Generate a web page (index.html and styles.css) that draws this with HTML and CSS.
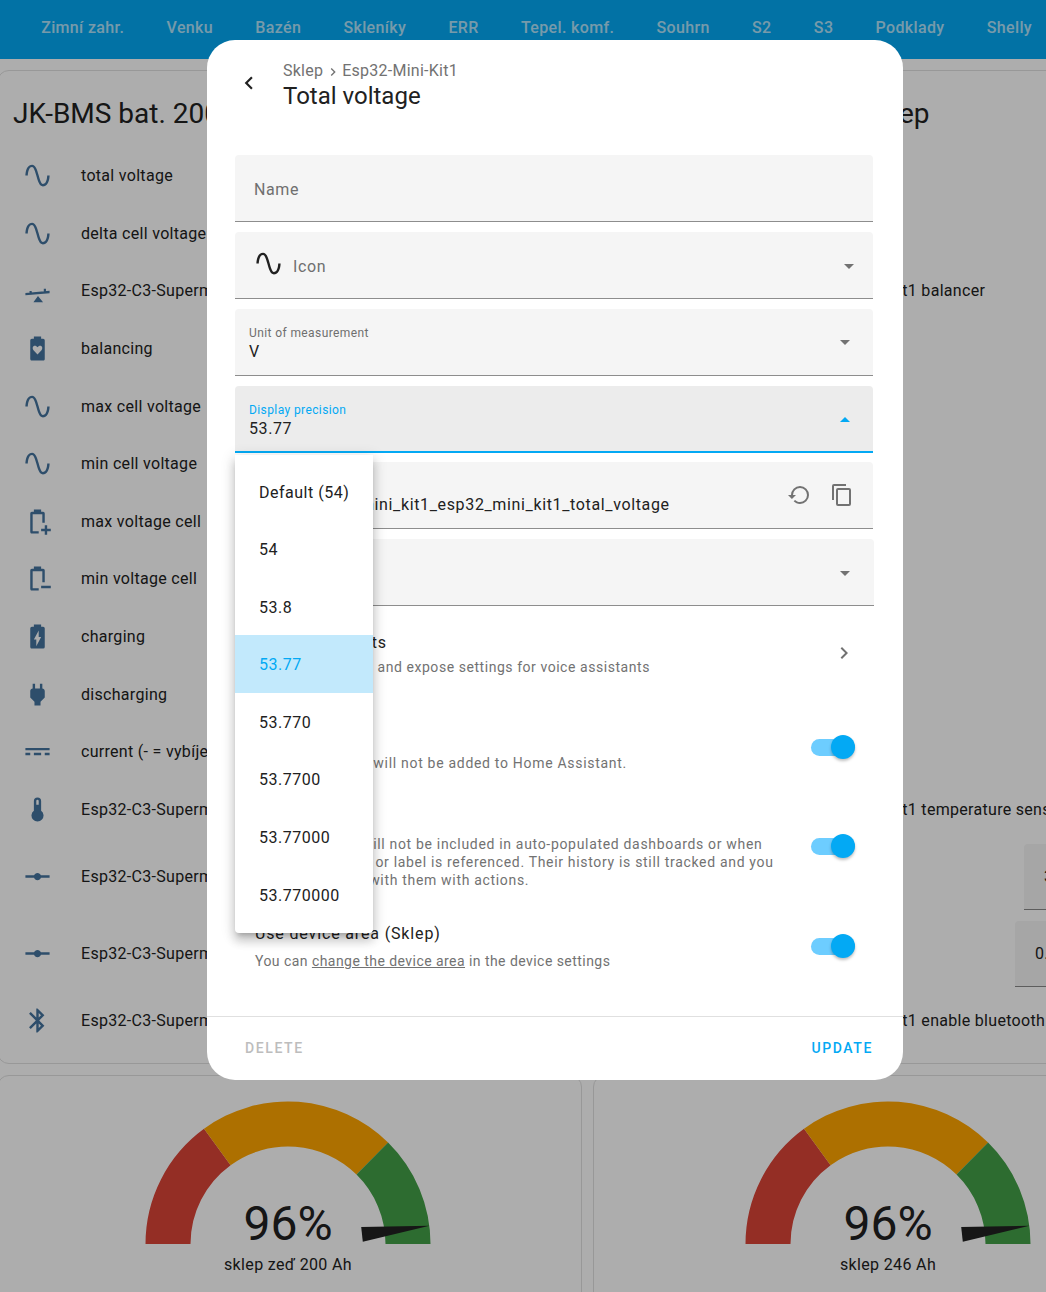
FILE: index.html
```html
<!DOCTYPE html>
<html lang="en">
<head>
    <meta charset="UTF-8">
    <meta name="viewport" content="width=device-width, initial-scale=1.0">
    <title>Total voltage</title>
    <link rel="stylesheet" href="styles.css">
</head>
<body>
    <svg class="icon-defs" aria-hidden="true">
        <symbol id="i-sine" viewBox="0 0 24 24"><path d="M16.5,21C13.5,21 12.31,16.76 11.05,12.28C10.14,9.04 9,5 7.5,5C4.11,5 4,11.93 4,12H2C2,11.63 2.06,3 7.5,3C10.5,3 11.71,7.25 12.97,11.74C13.86,14.97 15,19 16.5,19C19.94,19 20.03,12.07 20.03,12H22.03C22.03,12.37 21.97,21 16.5,21Z"/></symbol>
        <symbol id="i-seesaw" viewBox="0 0 24 24"><path d="M2,14L22,12.2V14.2L2,16ZM5.4,12.4H7.2V14.6H5.4ZM17.2,10.6H19V13H17.2ZM12.4,16.6L16.6,21.8H8.6Z"/></symbol>
        <symbol id="i-bat-heart" viewBox="0 0 24 24"><path fill-rule="evenodd" d="M16.67 4H15V2H9V4H7.33C6.6 4 6 4.6 6 5.33V20.67C6 21.4 6.6 22 7.33 22H16.67C17.41 22 18 21.41 18 20.67V5.33C18 4.6 17.4 4 16.67 4ZM12,17L8.7,13.4C7.5,12 8,9.7 9.8,9.7C10.7,9.7 11.5,10.2 12,11C12.5,10.2 13.3,9.7 14.2,9.7C16,9.7 16.5,12 15.3,13.4Z"/></symbol>
        <symbol id="i-bat-plus" viewBox="0 0 24 24"><path d="M16.67 4H15V2H9V4H7.33C6.6 4 6 4.6 6 5.33V20.67C6 21.4 6.6 22 7.33 22H13V20H8V6H16V13H18V5.33C18 4.6 17.4 4 16.67 4ZM20 18V15H18V18H15V20H18V23H20V20H23V18Z"/></symbol>
        <symbol id="i-bat-minus" viewBox="0 0 24 24"><path d="M16.67 4H15V2H9V4H7.33C6.6 4 6 4.6 6 5.33V20.67C6 21.4 6.6 22 7.33 22H13V20H8V6H16V15H18V5.33C18 4.6 17.4 4 16.67 4ZM15 18H23V20H15Z"/></symbol>
        <symbol id="i-bat-charge" viewBox="0 0 24 24"><path d="M16.67,4H15V2H9V4H7.33A1.33,1.33 0 0,0 6,5.33V20.67C6,21.4 6.6,22 7.33,22H16.67A1.33,1.33 0 0,0 18,20.67V5.33C18,4.6 17.4,4 16.67,4M11,20V14.5H9L13,7V12.5H15L11,20Z"/></symbol>
        <symbol id="i-plug" viewBox="0 0 24 24"><path d="M16,7V3H14V7H10V3H8V7C7,7 6,8 6,9V14.5L9.5,18V21H14.5V18L18,14.5V9C18,8 17,7 16,7Z"/></symbol>
        <symbol id="i-dc" viewBox="0 0 24 24"><path d="M2,9H22V11H2V9M2,13H6V15H2V13M9,13H15V15H9V13M18,13H22V15H18V13Z"/></symbol>
        <symbol id="i-thermo" viewBox="0 0 24 24"><path d="M15 13V5A3 3 0 0 0 9 5V13A5 5 0 1 0 15 13M12 4A1 1 0 0 1 13 5V8H11V5A1 1 0 0 1 12 4Z"/></symbol>
        <symbol id="i-vertex" viewBox="0 0 24 24"><path d="M2 11H9.17C9.58 9.83 10.69 9 12 9S14.42 9.83 14.83 11H22V13H14.83C14.42 14.17 13.31 15 12 15S9.58 14.17 9.17 13H2V11Z"/></symbol>
        <symbol id="i-bt" viewBox="0 0 24 24"><path d="M14.88,16.29L13,18.17V14.41M13,5.83L14.88,7.71L13,9.58M17.71,7.71L12,2H11V9.58L6.41,5L5,6.41L10.59,12L5,17.58L6.41,19L11,14.41V22H12L17.71,16.29L13.41,12L17.71,7.71Z"/></symbol>
        <symbol id="i-down" viewBox="0 0 24 24"><path d="M7,10L12,15L17,10H7Z"/></symbol>
        <symbol id="i-up" viewBox="0 0 24 24"><path d="M7,15L12,10L17,15H7Z"/></symbol>
        <symbol id="i-gauge" viewBox="0 0 286 143">
            <path fill="#db4437" d="M0.5 143A142.5 142.5 0 0 1 59 27.8L85.6 64.2A97.5 97.5 0 0 0 45.5 143Z"/>
            <path fill="#ffa600" d="M59 27.8A142.5 142.5 0 0 1 243.1 41.6L211.5 73.6A97.5 97.5 0 0 0 85.6 64.2Z"/>
            <path fill="#43a047" d="M243.1 41.6A142.5 142.5 0 0 1 285.5 143H240.5A97.5 97.5 0 0 0 211.5 73.6Z"/>
            <path fill="#212121" d="M284.5 124.7L216.2 126L217.8 140.7Z"/>
        </symbol>
    </svg>

    <header class="topbar">
        <span class="tab">Zimní zahr.</span>
        <span class="tab">Venku</span>
        <span class="tab">Bazén</span>
        <span class="tab">Skleníky</span>
        <span class="tab">ERR</span>
        <span class="tab">Tepel. komf.</span>
        <span class="tab">Souhrn</span>
        <span class="tab">S2</span>
        <span class="tab">S3</span>
        <span class="tab">Podklady</span>
        <span class="tab">Shelly</span>
    </header>

    <main class="board">
        <section class="card card-left">
            <h2 class="card-title">JK-BMS bat. 200 Ah zeď</h2>
            <div class="row"><svg class="row-icon"><use href="#i-sine"/></svg><span class="row-name">total voltage</span></div>
            <div class="row"><svg class="row-icon"><use href="#i-sine"/></svg><span class="row-name">delta cell voltage</span></div>
            <div class="row"><svg class="row-icon"><use href="#i-seesaw"/></svg><span class="row-name">Esp32-C3-Supermini-Kit1 balancer</span></div>
            <div class="row"><svg class="row-icon"><use href="#i-bat-heart"/></svg><span class="row-name">balancing</span></div>
            <div class="row"><svg class="row-icon"><use href="#i-sine"/></svg><span class="row-name">max cell voltage</span></div>
            <div class="row"><svg class="row-icon"><use href="#i-sine"/></svg><span class="row-name">min cell voltage</span></div>
            <div class="row"><svg class="row-icon"><use href="#i-bat-plus"/></svg><span class="row-name">max voltage cell</span></div>
            <div class="row"><svg class="row-icon"><use href="#i-bat-minus"/></svg><span class="row-name">min voltage cell</span></div>
            <div class="row"><svg class="row-icon"><use href="#i-bat-charge"/></svg><span class="row-name">charging</span></div>
            <div class="row"><svg class="row-icon"><use href="#i-plug"/></svg><span class="row-name">discharging</span></div>
            <div class="row"><svg class="row-icon"><use href="#i-dc"/></svg><span class="row-name">current (- = vybíjení)</span></div>
            <div class="row"><svg class="row-icon"><use href="#i-thermo"/></svg><span class="row-name">Esp32-C3-Supermini-Kit1 temperature sensor</span></div>
            <div class="row row-input"><svg class="row-icon"><use href="#i-vertex"/></svg><span class="row-name">Esp32-C3-Supermini-Kit1 balance start</span></div>
            <div class="row row-input"><svg class="row-icon"><use href="#i-vertex"/></svg><span class="row-name">Esp32-C3-Supermini-Kit1 balance trigger</span></div>
            <div class="row row-last"><svg class="row-icon"><use href="#i-bt"/></svg><span class="row-name">Esp32-C3-Supermini-Kit1 enable bluetooth</span></div>
        </section>

        <section class="card card-right">
            <h2 class="card-title">JK-BMS bat. 246 Ah sklep</h2>
            <div class="row"><svg class="row-icon"><use href="#i-sine"/></svg><span class="row-name">total voltage</span></div>
            <div class="row"><svg class="row-icon"><use href="#i-sine"/></svg><span class="row-name">delta cell voltage</span></div>
            <div class="row"><svg class="row-icon"><use href="#i-seesaw"/></svg><span class="row-name">Esp32-Mini-Kit1 Esp32-Mini-Kit1 balancer</span></div>
            <div class="row"><svg class="row-icon"><use href="#i-bat-heart"/></svg><span class="row-name">balancing</span></div>
            <div class="row"><svg class="row-icon"><use href="#i-sine"/></svg><span class="row-name">max cell voltage</span></div>
            <div class="row"><svg class="row-icon"><use href="#i-sine"/></svg><span class="row-name">min cell voltage</span></div>
            <div class="row"><svg class="row-icon"><use href="#i-bat-plus"/></svg><span class="row-name">max voltage cell</span></div>
            <div class="row"><svg class="row-icon"><use href="#i-bat-minus"/></svg><span class="row-name">min voltage cell</span></div>
            <div class="row"><svg class="row-icon"><use href="#i-bat-charge"/></svg><span class="row-name">charging</span></div>
            <div class="row"><svg class="row-icon"><use href="#i-plug"/></svg><span class="row-name">discharging</span></div>
            <div class="row"><svg class="row-icon"><use href="#i-dc"/></svg><span class="row-name">current</span></div>
            <div class="row"><svg class="row-icon"><use href="#i-thermo"/></svg><span class="row-name">Esp32-Mini-Kit1 Esp32-Mini-Kit1 temperature sensor</span></div>
            <div class="row row-input"><svg class="row-icon"><use href="#i-vertex"/></svg><span class="row-name">balance start</span><span class="num-box num-a">3.000</span></div>
            <div class="row row-input"><svg class="row-icon"><use href="#i-vertex"/></svg><span class="row-name">balance trigger</span><span class="num-box num-b">0.010</span></div>
            <div class="row row-last"><svg class="row-icon"><use href="#i-bt"/></svg><span class="row-name">Esp32-Mini-Kit1 Esp32-Mini-Kit1 enable bluetooth</span></div>
        </section>

        <section class="card gauge-card gauge-left">
            <div class="gauge">
                <svg class="gauge-arc"><use href="#i-gauge"/></svg>
                <span class="gauge-value">96%</span>
            </div>
            <div class="gauge-name">sklep zeď 200 Ah</div>
        </section>

        <section class="card gauge-card">
            <div class="gauge">
                <svg class="gauge-arc"><use href="#i-gauge"/></svg>
                <span class="gauge-value">96%</span>
            </div>
            <div class="gauge-name">sklep 246 Ah</div>
        </section>
    </main>

    <div class="scrim"></div>

    <div class="dialog">
        <div class="dialog-head">
            <svg class="back" viewBox="0 0 24 24"><path d="M15.41,16.58L10.83,12L15.41,7.41L14,6L8,12L14,18L15.41,16.58Z"/></svg>
            <div>
                <div class="crumb">Sklep <svg class="crumb-sep" viewBox="0 0 24 24"><path d="M8.59,16.58L13.17,12L8.59,7.41L10,6L16,12L10,18L8.59,16.58Z"/></svg> Esp32-Mini-Kit1</div>
                <div class="dialog-title">Total voltage</div>
            </div>
        </div>

        <div class="dialog-body">
            <div class="field field-plain"><span class="placeholder">Name</span></div>
            <div class="field field-icon">
                <svg class="field-glyph"><use href="#i-sine"/></svg>
                <span class="placeholder">Icon</span>
                <svg class="arrow arrow-icon"><use href="#i-down"/></svg>
            </div>
            <div class="field">
                <div class="field-text">
                    <div class="label">Unit of measurement</div>
                    <div class="value">V</div>
                </div>
                <svg class="arrow"><use href="#i-down"/></svg>
            </div>
            <div class="field field-active">
                <div class="field-text">
                    <div class="label">Display precision</div>
                    <div class="value">53.77</div>
                </div>
                <svg class="arrow"><use href="#i-up"/></svg>
            </div>
            <div class="field field-entity">
                <div class="field-text">
                    <div class="label">Entity ID</div>
                    <div class="value">sensor.esp32_mini_kit1_esp32_mini_kit1_total_voltage</div>
                </div>
                <svg class="tool tool-restore" viewBox="0 0 24 24"><path d="M13,3A9,9 0 0,0 4,12H1L4.89,15.89L4.96,16.03L9,12H6A7,7 0 0,1 13,5A7,7 0 0,1 20,12A7,7 0 0,1 13,19C11.07,19 9.32,18.21 8.06,16.94L6.64,18.36C8.27,20 10.5,21 13,21A9,9 0 0,0 22,12A9,9 0 0,0 13,3Z"/></svg>
                <svg class="tool" viewBox="0 0 24 24"><path d="M19,21H8V7H19M19,5H8A2,2 0 0,0 6,7V21A2,2 0 0,0 8,23H19A2,2 0 0,0 21,21V7A2,2 0 0,0 19,5M16,1H4A2,2 0 0,0 2,3V17H4V3H16V1Z"/></svg>
            </div>
            <div class="field field-area">
                <div class="field-text"><span class="placeholder">Area</span></div>
                <svg class="arrow"><use href="#i-down"/></svg>
            </div>

            <div class="setting setting-voice">
                <div class="setting-text">
                    <div class="setting-title">Voice assistants</div>
                    <div class="setting-sub">Manage aliases and expose settings for voice assistants</div>
                </div>
                <svg class="chevron" viewBox="0 0 24 24"><path d="M8.59,16.58L13.17,12L8.59,7.41L10,6L16,12L10,18L8.59,16.58Z"/></svg>
            </div>
            <div class="setting setting-enabled">
                <div class="setting-text">
                    <div class="setting-title">Enabled</div>
                    <div class="setting-sub">Disabled entities will not be added to Home Assistant.</div>
                </div>
                <span class="switch"></span>
            </div>
            <div class="setting setting-visible">
                <div class="setting-text">
                    <div class="setting-title">Visible</div>
                    <div class="setting-sub">Hidden entities will not be included in auto-populated dashboards or when their area, device or label is referenced. Their history is still tracked and you can still interact with them with actions.</div>
                </div>
                <span class="switch"></span>
            </div>
            <div class="setting setting-area">
                <div class="setting-text">
                    <div class="setting-title">Use device area (Sklep)</div>
                    <div class="setting-sub">You can <span class="link">change the device area</span> in the device settings</div>
                </div>
                <span class="switch"></span>
            </div>
        </div>

        <div class="dialog-foot">
            <span class="btn btn-off">DELETE</span>
            <span class="btn btn-on">UPDATE</span>
        </div>

        <ul class="menu">
            <li>Default (54)</li>
            <li>54</li>
            <li>53.8</li>
            <li class="selected">53.77</li>
            <li>53.770</li>
            <li>53.7700</li>
            <li>53.77000</li>
            <li>53.770000</li>
        </ul>
    </div>
</body>
</html>
```

FILE: styles.css
```css
* {
    box-sizing: border-box;
}
html, body {
    width: 1046px;
    height: 1292px;
    margin: 0;
    overflow: hidden;
}
body {
    position: relative;
    background-color: #fff;
    color: #212121;
    font-family: Roboto, "Liberation Sans", sans-serif;
    font-size: 16px;
}
.icon-defs {
    position: absolute;
    width: 0;
    height: 0;
}

/* top bar */
.topbar {
    display: flex;
    align-items: center;
    height: 59px;
    padding: 0 0 5px 20px;
    background-color: #03a9f4;
    white-space: nowrap;
}
.tab {
    padding: 0 21.15px;
    color: rgba(255, 255, 255, 0.7);
    font-weight: 500;
    letter-spacing: 0.35px;
}

/* cards behind the dialog */
.board {
    display: grid;
    grid-template-columns: 585px 590px;
    gap: 11px;
    margin: 11px 0 0 -3px;
}
.card {
    border: 1px solid #e0e0e0;
    border-radius: 12px;
    overflow: hidden;
}
.card-left, .card-right {
    height: 994px;
    padding: 0 15px;
}
.card-title {
    margin: 0;
    padding-top: 26px;
    height: 76px;
    font-size: 28px;
    font-weight: 400;
    white-space: nowrap;
}
.row {
    display: flex;
    align-items: center;
    height: 57.6px;
    white-space: nowrap;
    letter-spacing: 0.3px;
}
.row-input {
    height: 77px;
}
.row-last {
    height: 56.4px;
}
.row-icon {
    flex: none;
    width: 29px;
    height: 29px;
    margin: 0 29.5px 0 9.5px;
    fill: #44739e;
}
.card-right .row-icon {
    margin-right: 32.5px;
}
.row-name {
    flex: 1;
    min-width: 0;
}
.num-box {
    flex: none;
    height: 66px;
    padding-left: 20px;
    line-height: 66px;
    background-color: #f5f5f5;
    border-bottom: 1px solid #8a8a8a;
    border-radius: 4px 4px 0 0;
}
.num-a {
    width: 143px;
}
.num-b {
    width: 152px;
}
.gauge-card {
    height: 240px;
    padding-top: 25px;
    text-align: center;
}
.gauge-left {
    padding-right: 3px;
}
.gauge {
    position: relative;
    width: 286px;
    height: 143px;
    margin: 0 auto;
}
.gauge-arc {
    display: block;
    width: 286px;
    height: 143px;
}
.gauge-value {
    position: absolute;
    left: 0;
    right: 0;
    top: 93px;
    font-size: 48px;
    line-height: 60px;
}
.gauge-name {
    margin-top: 11px;
    line-height: 20px;
    letter-spacing: 0.35px;
}

.scrim {
    position: absolute;
    inset: 0;
    background-color: rgba(0, 0, 0, 0.32);
}

/* dialog */
.dialog {
    position: absolute;
    left: 207px;
    top: 40px;
    display: flex;
    flex-direction: column;
    width: 696px;
    height: 1040px;
    background-color: #fff;
    border-radius: 28px;
}
.dialog-head {
    display: flex;
    height: 115px;
    padding: 21px 0 0 29px;
}
.back {
    flex: none;
    width: 26px;
    height: 26px;
    margin-top: 9px;
    margin-right: 21px;
    fill: #212121;
}
.crumb {
    display: flex;
    align-items: center;
    color: #727272;
    line-height: 20px;
    letter-spacing: 0.25px;
}
.crumb-sep {
    flex: none;
    width: 16px;
    height: 16px;
    margin: 1px 1px 0 2px;
    fill: #727272;
}
.dialog-title {
    font-size: 24px;
    line-height: 31px;
}
.dialog-body {
    flex: 1;
    padding: 0 30px 0 28px;
}

.field {
    display: flex;
    align-items: center;
    height: 67px;
    margin-bottom: 10px;
    padding: 0 16px 0 14px;
    background-color: #f5f5f5;
    border-bottom: 1px solid #8d8d8d;
    border-radius: 4px 4px 0 0;
    letter-spacing: 0.6px;
}
.field-plain {
    padding-left: 19px;
    padding-top: 2px;
}
.field-icon {
    padding-left: 19px;
    padding-top: 2px;
}
.field-glyph {
    flex: none;
    width: 29px;
    height: 29px;
    margin: 0 10px 5px 0;
    fill: #212121;
}
.field-text {
    flex: 1;
    min-width: 0;
    padding-top: 6px;
    white-space: nowrap;
}
.placeholder {
    color: #6f6f6f;
}
.label {
    color: #6f6f6f;
    font-size: 12px;
    line-height: 14px;
    letter-spacing: 0.4px;
}
.value {
    line-height: 24px;
}
.arrow {
    flex: none;
    width: 24px;
    height: 24px;
    fill: #727272;
}
.arrow-icon {
    margin-left: auto;
    margin-right: -4px;
}
.field-active {
    margin-bottom: 9px;
    background-color: #ececec;
    border-bottom: 2px solid #03a9f4;
}
.field-active .label {
    color: #03a9f4;
}
.field-active .arrow {
    fill: #03a9f4;
}
.field-entity .field-text {
    padding-top: 0;
}
.field-entity .value {
    margin-top: 5px;
    letter-spacing: 0.64px;
}
.tool {
    flex: none;
    width: 24px;
    height: 24px;
    margin-right: 3px;
    fill: #727272;
}
.tool-restore {
    margin-right: 19px;
}
.field-area {
    margin-right: -1px;
    padding-top: 1px;
}
.field-area .arrow {
    margin-right: 1px;
}

.setting {
    display: flex;
    align-items: center;
    padding: 0 18px 0 19px;
}
.setting-text {
    flex: 1;
    min-width: 0;
}
.setting-title {
    line-height: 24px;
    letter-spacing: 0.85px;
}
.setting-sub {
    color: #727272;
    font-size: 14px;
    line-height: 18px;
    letter-spacing: 0.45px;
}
.setting-voice {
    height: 94px;
    margin-top: -10px;
}
.setting-voice .setting-title {
    padding-left: 2px;
}
.setting-voice .setting-sub {
    margin-top: 3px;
    padding-left: 14px;
    letter-spacing: 0.55px;
}
.setting-enabled {
    height: 94px;
}
.setting-enabled .setting-text {
    padding-top: 8px;
}
.setting-enabled .setting-sub {
    letter-spacing: 0.7px;
}
.setting-visible {
    height: 104px;
}
.setting-visible .setting-text {
    padding-top: 8px;
    padding-right: 27px;
}
.setting-visible .setting-sub {
    letter-spacing: 0.68px;
}
.setting-area {
    height: 96px;
}
.setting-area .setting-text {
    padding-left: 1px;
}
.setting-area .setting-sub {
    margin-top: 6px;
}
.link {
    text-decoration: underline;
}
.chevron {
    flex: none;
    width: 24px;
    height: 24px;
    margin-right: -1px;
    fill: #727272;
}
.switch {
    position: relative;
    flex: none;
    width: 44px;
    height: 17px;
    background-color: #6dcdff;
    border-radius: 9px;
}
.switch::after {
    content: "";
    position: absolute;
    right: 0;
    top: -4px;
    width: 24px;
    height: 24px;
    background-color: #03a9f4;
    border-radius: 50%;
    box-shadow: 0 2px 3px rgba(0, 0, 0, 0.25);
}

.dialog-foot {
    display: flex;
    justify-content: space-between;
    align-items: center;
    height: 64px;
    padding: 0 30px 1px 38px;
    border-top: 1px solid #e0e0e0;
}
.btn {
    font-size: 14px;
    font-weight: 500;
    letter-spacing: 1.6px;
}
.btn-off {
    color: #bdbdbd;
}
.btn-on {
    color: #03a9f4;
}

/* open dropdown over the fields */
.menu {
    position: absolute;
    left: 28px;
    top: 415px;
    width: 138px;
    height: 478px;
    margin: 0;
    padding: 7.5px 0 0;
    list-style: none;
    background-color: #fff;
    border-radius: 0 0 4px 4px;
    box-shadow: 0 5px 5px -3px rgba(0, 0, 0, 0.2), 0 8px 10px 1px rgba(0, 0, 0, 0.14), 0 3px 14px 2px rgba(0, 0, 0, 0.12);
    letter-spacing: 0.5px;
}
.menu li {
    height: 57.6px;
    padding-left: 24px;
    line-height: 60px;
}
.menu .selected {
    color: #03a9f4;
    background-color: #c2e9fc;
}
```
